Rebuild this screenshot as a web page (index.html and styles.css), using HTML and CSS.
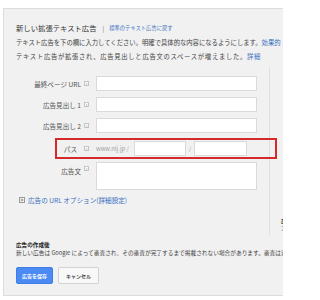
FILE: index.html
```html
<!DOCTYPE html>
<html lang="ja">
<head>
<meta charset="utf-8">
<title>新しい拡張テキスト広告</title>
<link rel="stylesheet" href="styles.css">
</head>
<body>
<div class="panel">
  <div class="head">
    <div class="title-row">
      <span class="title">新しい拡張テキスト広告</span>
      <span class="sep">|</span>
      <a class="link small">標準のテキスト広告に戻す</a>
    </div>
    <p class="desc d1">テキスト広告を下の欄に入力してください。明確で具体的な内容になるようにします。<a class="link">効果的</a></p>
    <p class="desc d2">テキスト広告が拡張され、広告見出しと広告文のスペースが増えました。<a class="link">詳細</a></p>
  </div>
  <div class="main">
    <div class="form">
      <div class="row">
        <span class="label">最終ページ URL</span><span class="help">?</span>
        <span class="input wide"></span>
      </div>
      <div class="row">
        <span class="label">広告見出し 1</span><span class="help">?</span>
        <span class="input wide"></span>
      </div>
      <div class="row">
        <span class="label">広告見出し 2</span><span class="help">?</span>
        <span class="input wide"></span>
      </div>
      <div class="row path">
        <span class="label short">パス</span><span class="help">?</span>
        <span class="domain">www.nlj.jp /</span>
        <span class="input p1"></span>
        <span class="slash">/</span>
        <span class="input p2"></span>
      </div>
      <div class="row top">
        <span class="label">広告文</span><span class="help">?</span>
        <span class="input area"></span>
      </div>
      <div class="url-opt">
        <svg class="plus" width="6" height="6" viewBox="0 0 6 6"><rect x="0.5" y="0.5" width="5" height="5" fill="#fff" stroke="#9a9a9a"/><path d="M1.5 3H4.5M3 1.5V4.5" stroke="#777" stroke-width="0.8"/></svg>
        <a class="link">広告の URL オプション(詳細設定)</a>
      </div>
    </div>
    <div class="side">
      <div class="side-title">広告</div>
      <a class="link side-link">ガイド</a>
    </div>
  </div>
  <div class="after">
    <div class="after-title">広告の作成後</div>
    <div class="after-text">新しい広告は Google によって審査され、その審査が完了するまで掲載されない場合があります。審査は通常</div>
  </div>
  <div class="buttons">
    <span class="btn primary">広告を保存</span>
    <span class="btn">キャンセル</span>
  </div>
</div>
</body>
</html>
```
FILE: styles.css
```css
html, body {
  margin: 0;
  padding: 0;
  overflow: hidden;
  background: #fff;
}
body {
  width: 283px;
  height: 300px;
  font-family: "Noto Sans CJK JP", "Noto Sans", sans-serif;
  color: #333;
}
.panel {
  margin: 8px 0 0 3px;
  width: 279px;
  height: 286px;
  background: #f1f1f1;
  border: 1px solid #dcdcdc;
  border-right: none;
  overflow: hidden;
}
.head {
  padding: 14px 0 0 12px;
  margin-bottom: 4px;
}
.title-row {
  display: flex;
  align-items: center;
  height: 10px;
  white-space: nowrap;
}
.title {
  font-size: 7.35px;
  line-height: 10px;
  color: #333;
}
.sep {
  font-size: 6px;
  color: #777;
  margin: 0 5px 0 6px;
}
.link {
  color: #3a6fc1;
}
.small {
  font-size: 5.3px;
}
.desc {
  margin: 0;
  font-size: 6.33px;
  line-height: 14px;
  white-space: nowrap;
  overflow: hidden;
  color: #444;
}
.d1 {
  margin-top: 3px;
}
.d2 {
  letter-spacing: 0.7px;
}
.main {
  display: flex;
}
.form {
  flex: none;
  width: 266px;
  padding: 8px 0 30px 12px;
  border-right: 1px solid #dedede;
  box-sizing: border-box;
  display: flex;
  flex-direction: column;
}
.row {
  display: flex;
  align-items: center;
  height: 15px;
  margin-top: 6px;
}
.row:first-child {
  margin-top: 0;
}
.row.path {
  margin-top: 8px;
  position: relative;
}
.row.path::after {
  content: "";
  position: absolute;
  left: 39px;
  top: -3px;
  width: 222px;
  height: 21px;
  border: 2px solid #d42a2a;
  box-sizing: border-box;
}
.row.top {
  align-items: flex-start;
  height: 28px;
}
.row.top .label,
.row.top .help {
  margin-top: 4px;
}
.label {
  width: 65px;
  text-align: right;
  font-size: 6.6px;
  color: #555;
  white-space: nowrap;
}
.label.short {
  padding-right: 4px;
  box-sizing: border-box;
}
.help {
  width: 5px;
  height: 5px;
  margin-left: 3px;
  border: 0.5px solid #c4c4c4;
  background: #fafafa;
  font-size: 4px;
  line-height: 5px;
  text-align: center;
  color: #999;
  box-sizing: border-box;
}
.input {
  display: block;
  height: 15px;
  background: #fff;
  border: 1px solid #dadada;
  box-sizing: border-box;
}
.wide {
  margin-left: 7px;
  width: 161px;
}
.area {
  margin-left: 7px;
  width: 161px;
  height: 28px;
}
.domain {
  margin-left: 7px;
  width: 38px;
  font-size: 5.8px;
  color: #a0a0a0;
  white-space: nowrap;
}
.p1 {
  width: 52px;
}
.slash {
  width: 8px;
  text-align: center;
  font-size: 5.5px;
  color: #999;
}
.p2 {
  width: 53px;
}
.url-opt {
  display: flex;
  align-items: center;
  height: 10px;
  margin-top: 5px;
  padding-left: 3px;
  white-space: nowrap;
}
.url-opt .plus {
  margin-right: 3px;
}
.url-opt .link {
  font-size: 6.6px;
}
.side {
  flex: none;
  padding: 149px 0 0 11px;
  white-space: nowrap;
}
.side-title {
  font-size: 6px;
  line-height: 7px;
  font-weight: bold;
  color: #333;
}
.side-link {
  display: block;
  font-size: 6px;
  line-height: 7px;
}
.after {
  margin-top: 7px;
  padding-left: 12px;
  white-space: nowrap;
}
.after-title {
  font-size: 5.6px;
  line-height: 7px;
  font-weight: bold;
  color: #222;
}
.after-text {
  font-size: 5.7px;
  line-height: 7px;
  color: #444;
}
.buttons {
  display: flex;
  gap: 5px;
  margin-top: 11px;
  padding-left: 12px;
}
.btn {
  display: flex;
  align-items: center;
  justify-content: center;
  width: 41px;
  height: 17px;
  border: 1px solid #d3d3d3;
  background: #f8f8f8;
  border-radius: 2px;
  box-sizing: border-box;
  font-size: 5px;
  font-weight: bold;
  color: #444;
}
.btn.primary {
  width: 37px;
  background: #4a8af2;
  border-color: #3f7de6;
  color: #fff;
}
```
